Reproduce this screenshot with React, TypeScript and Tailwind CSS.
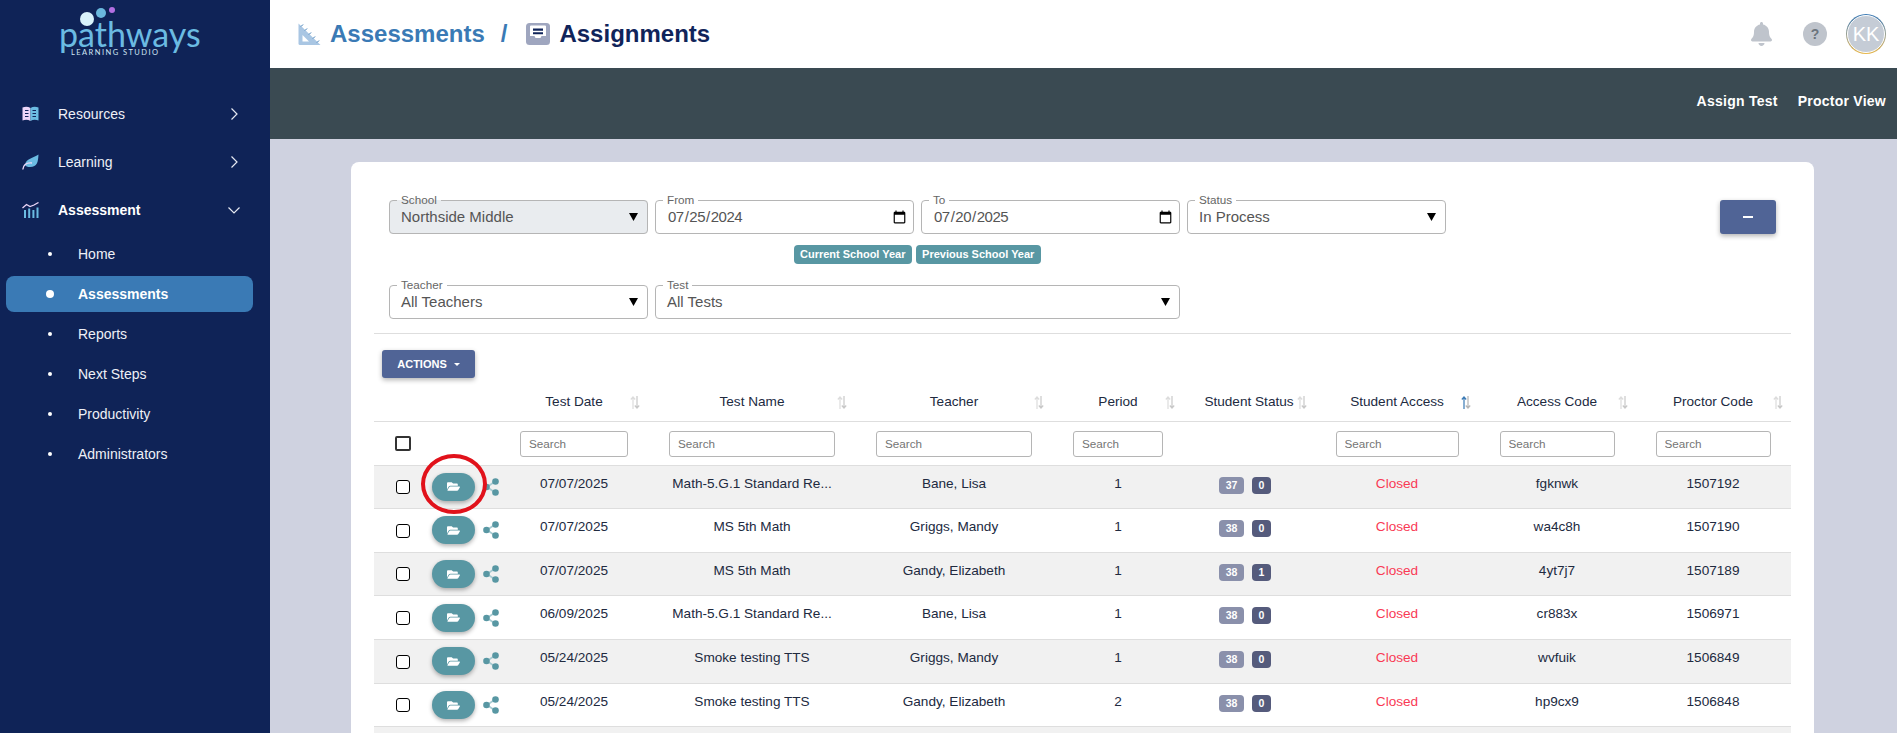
import React from "react";
import { FaBell, FaFolderOpen } from "react-icons/fa";

const FONT = "[font-family:'Liberation_Sans',Arial,sans-serif]";

const BookIcon = () => (
  <svg width="17" height="16" viewBox="0 0 17 16">
    <path d="M0.5 1.5 Q5 0 8.5 2 V15 Q5 13 0.5 14.5Z" fill="#ecd6f8" />
    <path d="M16.5 1.5 Q12 0 8.5 2 V15 Q12 13 16.5 14.5Z" fill="#6bbbe2" />
    <path d="M3 4.5h3.5M3 7.5h3.5M3 10.5h3.5M10.5 4.5H14M10.5 7.5H14M10.5 10.5H14" stroke="#10245a" strokeWidth="1.2" />
  </svg>
);
const LeafIcon = () => (
  <svg width="17" height="16" viewBox="0 0 17 16">
    <path d="M16.5 0.5 C16 8 15.5 13 8 13 C5.5 13 4 12.5 3 11 C4 4 11 4.5 16.5 0.5Z" fill="#6bbbe2" />
    <path d="M0.8 15.5 C1.5 10.5 5 8.5 10 9" stroke="#ecd6f8" strokeWidth="1.4" fill="none" />
  </svg>
);
const ChartIcon = () => (
  <svg width="17" height="16" viewBox="0 0 17 16">
    <path d="M0.5 6 L4.5 2.5 L8 4.5 L12 3 L16.5 0.5" stroke="#ecd6f8" strokeWidth="1.3" fill="none" />
    <path d="M2 8h2v8H2zM6.2 6.5h2V16h-2zM10.4 8h2v8h-2zM14.5 5.5h2V16h-2z" fill="#6bbbe2" />
  </svg>
);
const Chevron = ({ down }: { down?: boolean }) => (
  <svg width="12" height="12" viewBox="0 0 12 12" fill="none" stroke="#e6e9f2" strokeWidth="1.2">
    {down ? <path d="M0.5 3.5 L6 9 L11.5 3.5" /> : <path d="M3.5 0.5 L9 6 L3.5 11.5" />}
  </svg>
);
const SetSquare = () => (
  <svg width="23" height="23" viewBox="0 0 23 23">
    <path d="M0.5 0.5 L22.5 22 H2 Q0.5 22 0.5 20.5Z" fill="#a9c6e3" />
    <path d="M4.5 12 L11 18.5 H4.5Z" fill="#fff" />
    <path d="M3 3.5l2-2M7 7.5l2-2M11 11.5l2-2M15 15.5l2-2M19 19.5l2-2" stroke="#3a7ab5" strokeWidth="1" />
  </svg>
);
const InboxIcon = () => (
  <svg width="24" height="22" viewBox="0 0 24 22">
    <rect x="0" y="0" width="24" height="22" rx="3.5" fill="#9fa6bf" />
    <path d="M4 3.5 Q4 2.5 5 2.5 H19 Q20 2.5 20 3.5 V13 H15.5 L14.5 15 H9.5 L8.5 13 H4Z" fill="#fff" />
    <path d="M7 5.5h10v2.2H7zM7 9.2h10v2H7z" fill="#10245a" />
  </svg>
);
const Caret = () => (
  <svg width="9" height="8" viewBox="0 0 9 8" className="shrink-0">
    <path d="M0 0 H9 L4.5 8Z" fill="#000" />
  </svg>
);
const SortIcon = ({ active }: { active?: boolean }) => (
  <svg width="10" height="13" viewBox="0 0 10 13" fill="none" strokeWidth="1.2">
    <path d="M3 13V1M0.8 3.5 L3 1 L5.2 3.5" stroke={active ? "#3a7ab5" : "#dcdcdc"} />
    <path d="M7 0V12M4.8 9.5 L7 12 L9.2 9.5" stroke={active ? "#b5b5b5" : "#c8c8c8"} />
  </svg>
);
const ShareIcon = () => (
  <svg width="16" height="18" viewBox="0 0 16 18">
    <path d="M4 9 L12 3.5M4 9 L12 14.5" stroke="#a7cbd2" strokeWidth="1.6" />
    <circle cx="3.5" cy="9" r="3.3" fill="#5897a3" />
    <circle cx="12.5" cy="3.5" r="3.3" fill="#5897a3" />
    <circle cx="12.5" cy="14.5" r="3.3" fill="#5897a3" />
  </svg>
);

const Field = ({ label, className, gray, children }: { label: string; className?: string; gray?: boolean; children: React.ReactNode }) => (
  <fieldset className={`h-[41px] rounded-[4px] border border-[#b5b5b5] ${gray ? "bg-[#e9ecef]" : "bg-white"} ${className ?? ""}`}>
    <legend className="ml-[7px] px-[4px] text-[11.7px] leading-[14px] text-[#666]">{label}</legend>
    <div className="flex h-[20px] items-center justify-between pl-[11px] pr-[9px] text-[15px] text-[#555]">{children}</div>
  </fieldset>
);

const SelectField = ({ label, value, className, gray }: { label: string; value: string; className?: string; gray?: boolean }) => (
  <Field label={label} className={className} gray={gray}>
    <span>{value}</span>
    <Caret />
  </Field>
);

const DateField = ({ label, value }: { label: string; value: string }) => (
  <Field label={label}>
    <input type="date" defaultValue={value} className="h-[20px] w-[calc(100%+5px)] shrink-0 text-[15px] tracking-[-0.5px] text-[#555] outline-none" />
  </Field>
);

const NavItem = ({ icon, label, bold, down }: { icon: React.ReactNode; label: string; bold?: boolean; down?: boolean }) => (
  <div className="flex h-[48px] items-center pl-[22px] pr-[30px]">
    <span className="flex w-[36px] shrink-0">{icon}</span>
    <span className={`flex-1 text-[14px] ${bold ? "font-bold text-white" : "text-[#eef0f6]"}`}>{label}</span>
    <Chevron down={down} />
  </div>
);

const SubItem = ({ label, active }: { label: string; active?: boolean }) => (
  <div className="flex h-[40px] items-center px-[6px]">
    <div className={`flex h-[36px] w-[247px] items-center rounded-[8px] ${active ? "bg-[#3a7ab5]" : ""}`}>
      <span className="flex w-[72px] shrink-0 justify-center pl-[16px]">
        <span className={`rounded-full bg-white ${active ? "h-[8px] w-[8px]" : "h-[4px] w-[4px]"}`} />
      </span>
      <span className={`text-[14px] ${active ? "font-bold text-white" : "text-[#eef0f6]"}`}>{label}</span>
    </div>
  </div>
);

const columns = [
  { label: "Test Date", pos: "right-[17px]", w: "w-[166px]", search: "w-[108px]", pad: "" },
  { label: "Test Name", pos: "right-0", w: "w-[190px]", search: "w-[166px]", pad: "" },
  { label: "Teacher", pos: "right-[17px]", w: "w-[214px]", search: "w-[156px]", pad: "" },
  { label: "Period", pos: "right-0", w: "w-[114px]", search: "w-[90px]", pad: "" },
  { label: "Student Status", pos: "right-[8px]", w: "w-[140px]", search: "", pad: "pl-[8px]" },
  { label: "Student Access", pos: "right-[8px]", w: "w-[164px]", search: "w-[123px]", pad: "", active: true },
  { label: "Access Code", pos: "right-[7px]", w: "w-[156px]", search: "w-[115px]", pad: "" },
  { label: "Proctor Code", pos: "right-[8px]", w: "w-[156px]", search: "w-[115px]", pad: "" },
];

const rows = [
  ["07/07/2025", "Math-5.G.1 Standard Re...", "Bane, Lisa", "1", "37", "0", "fgknwk", "1507192"],
  ["07/07/2025", "MS 5th Math", "Griggs, Mandy", "1", "38", "0", "wa4c8h", "1507190"],
  ["07/07/2025", "MS 5th Math", "Gandy, Elizabeth", "1", "38", "1", "4yt7j7", "1507189"],
  ["06/09/2025", "Math-5.G.1 Standard Re...", "Bane, Lisa", "1", "38", "0", "cr883x", "1506971"],
  ["05/24/2025", "Smoke testing TTS", "Griggs, Mandy", "1", "38", "0", "wvfuik", "1506849"],
  ["05/24/2025", "Smoke testing TTS", "Gandy, Elizabeth", "2", "38", "0", "hp9cx9", "1506848"],
];

const Cell = ({ children }: { children: React.ReactNode }) => (
  <td className="h-[43.67px] truncate pt-[10px] align-top text-center leading-[15px]">{children}</td>
);

export default function App() {
  return (
    <div className={`flex h-[733px] w-full overflow-hidden bg-[#cfd2e0] ${FONT}`}>
      <aside className="h-full w-[270px] shrink-0 bg-[#0f2357]">
        <div className="flex h-[90px] flex-col items-start pl-[59px]">
          <svg width="70" height="24" viewBox="0 0 70 24" className="mt-[6px] shrink-0">
            <circle cx="28" cy="13" r="7" fill="#d9f2fb" />
            <circle cx="42" cy="7" r="5" fill="#6ab8dd" />
            <circle cx="53" cy="4" r="3" fill="#b36fe2" />
          </svg>
          <div className="mt-[-11px] text-[34px] leading-[30px] font-normal text-[#6bbbe2] [font-family:Lato,sans-serif]">pathways</div>
          <div className="mt-[0px] ml-[12px] text-[7.5px] leading-[8px] tracking-[1.45px] text-[#cfe6f5] [font-family:Lato,sans-serif]">LEARNING STUDIO</div>
        </div>
        <NavItem icon={<BookIcon />} label="Resources" />
        <NavItem icon={<LeafIcon />} label="Learning" />
        <NavItem icon={<ChartIcon />} label="Assessment" bold down />
        <SubItem label="Home" />
        <SubItem label="Assessments" active />
        <SubItem label="Reports" />
        <SubItem label="Next Steps" />
        <SubItem label="Productivity" />
        <SubItem label="Administrators" />
      </aside>

      <main className="flex min-w-0 flex-1 flex-col">
        <header className="flex h-[68px] shrink-0 items-center bg-white pl-[28px] pr-[11px]">
          <SetSquare />
          <span className="ml-[9px] text-[24px] font-bold text-[#3a7ab5]">Assessments</span>
          <span className="ml-[16px] text-[24px] font-bold text-[#3a7ab5]">/</span>
          <span className="ml-[19px] flex"><InboxIcon /></span>
          <span className="ml-[9px] text-[24px] font-bold text-[#10245a]">Assignments</span>
          <div className="ml-auto flex items-center">
            <FaBell className="h-[24px] w-[21px] text-[#bfc4cc]" />
            <span className="ml-[31px] flex h-[24px] w-[24px] items-center justify-center rounded-full bg-[#bfc4cc] text-[14px] font-bold text-[#6c757d]">?</span>
            <span className="ml-[19px] flex h-[40px] w-[40px] items-center justify-center rounded-full bg-linear-to-b from-[#3a7ab5] to-[#e8b84a] p-px">
              <span className="flex h-full w-full items-center justify-center rounded-full border border-white bg-[#c5ccd6] text-[20px] text-white">KK</span>
            </span>
          </div>
        </header>

        <div className="flex h-[71px] shrink-0 items-center justify-end gap-[20px] bg-[#3a4a52] pb-[4px] pr-[11px] text-[14px] font-bold tracking-[0.25px] text-white">
          <span>Assign Test</span>
          <span>Proctor View</span>
        </div>

        <section className="mt-[23px] ml-[81px] mr-[83px] flex-1 rounded-[8px] bg-white px-[23px] pt-[31px]">
          <div className="flex items-start justify-between border-b border-[#dedede] px-[15px] pb-[14px]">
            <div className="grid grid-cols-[repeat(4,258.5px)] gap-x-[7.5px]">
              <SelectField label="School" value="Northside Middle" gray />
              <DateField label="From" value="2024-07-25" />
              <DateField label="To" value="2025-07-20" />
              <SelectField label="Status" value="In Process" />
              <div className="col-span-2 col-start-2 mt-[11px] flex justify-center gap-[4px]">
                <span className="flex h-[19px] w-[118px] items-center justify-center rounded-[4px] bg-[#5897a3] text-[11px] font-bold text-white">Current School Year</span>
                <span className="flex h-[19px] w-[125px] items-center justify-center rounded-[4px] bg-[#5897a3] text-[11px] font-bold text-white">Previous School Year</span>
              </div>
              <div className="col-span-4 mt-[14px] grid grid-cols-[repeat(4,258.5px)] gap-x-[7.5px]">
                <SelectField label="Teacher" value="All Teachers" />
                <SelectField label="Test" value="All Tests" className="col-span-2" />
              </div>
            </div>
            <button className="mt-[7px] flex h-[34px] w-[56px] items-center justify-center rounded-[3px] bg-[#506496] shadow-[0_2px_5px_rgba(0,0,0,0.3)]">
              <span className="h-[2px] w-[10px] bg-white" />
            </button>
          </div>

          <div className="mt-[16px] pl-[8px]">
            <button className="flex h-[28px] w-[93px] items-center justify-center gap-[7px] rounded-[3px] bg-[#506496] text-[11px] font-bold text-white shadow-[0_2px_5px_rgba(0,0,0,0.3)]">
              ACTIONS
              <svg width="6" height="3" viewBox="0 0 6 3"><path d="M0 0h6L3 3z" fill="#fff" /></svg>
            </button>
          </div>

          <table className="mt-[2px] w-[1417px] table-fixed border-collapse text-[13.6px] text-[#212a3f]">
            <colgroup>
              <col className="w-[58px]" />
              <col className="w-[59px]" />
              {columns.map((c) => <col key={c.label} className={c.w} />)}
            </colgroup>
            <thead>
              <tr className="h-[41px] border-b border-[#dedede]">
                <th />
                <th />
                {columns.map((c) => (
                  <th key={c.label} className={`relative pt-[3px] text-center font-normal ${c.pad}`}>
                    {c.label}
                    <span className={`absolute top-[16px] flex ${c.pos}`}><SortIcon active={c.active} /></span>
                  </th>
                ))}
              </tr>
              <tr className="h-[44px] border-b border-[#dedede]">
                <th className="text-center align-middle">
                  <input type="checkbox" aria-label="Select all" className="h-[15px] w-[16px] appearance-none rounded-[2px] border-2 border-[#333] align-middle" />
                </th>
                <th />
                {columns.map((c) => (
                  <th key={c.label} className="pt-[1px] text-center font-normal">
                    {c.search && (
                      <input placeholder="Search" className={`h-[26px] rounded-[3px] border border-[#b5b5b5] pl-[8px] text-[11.7px] outline-none placeholder:text-[#757575] ${c.search}`} />
                    )}
                  </th>
                ))}
              </tr>
            </thead>
            <tbody>
              {rows.map((r, i) => (
                <tr key={i} className={`border-b border-[#dedede] ${i % 2 === 0 ? "bg-[#f1f1f1]" : "bg-white"}`}>
                  <td className="h-[43.67px] text-center align-middle">
                    <input type="checkbox" aria-label="Select row" className="h-[14px] w-[14px] appearance-none rounded-[3px] border border-black bg-white align-middle" />
                  </td>
                  <td className="align-middle">
                    <div className="flex items-center gap-[8px]">
                      <div className="relative shrink-0">
                        <button className="flex h-[28px] w-[43px] items-center justify-center rounded-full bg-[#5897a3] shadow-[0_2px_4px_rgba(0,0,0,0.3)]">
                          <FaFolderOpen className="h-[13px] w-[13px] text-white" />
                        </button>
                        {i === 0 && (
                          <span className="absolute top-[-19px] left-[-11px] h-[60px] w-[66px] rounded-[50%] border-[4px] border-[#e1121b]" />
                        )}
                      </div>
                      <span className="flex shrink-0"><ShareIcon /></span>
                    </div>
                  </td>
                  <Cell>{r[0]}</Cell>
                  <Cell>{r[1]}</Cell>
                  <Cell>{r[2]}</Cell>
                  <Cell>{r[3]}</Cell>
                  <td className="pt-[11px] align-top">
                    <div className="flex justify-center gap-[8px] text-[10.5px] font-bold leading-[17px] text-white">
                      <span className="h-[17px] w-[25px] rounded-[4px] bg-[#8a90ab] text-center">{r[4]}</span>
                      <span className="h-[17px] w-[19px] rounded-[4px] bg-[#555b7c] text-center">{r[5]}</span>
                    </div>
                  </td>
                  <td className="pt-[10px] align-top text-center leading-[15px] text-[#f93a55]">Closed</td>
                  <Cell>{r[6]}</Cell>
                  <Cell>{r[7]}</Cell>
                </tr>
              ))}
              <tr className="bg-[#f1f1f1]">
                <td colSpan={10} className="h-[43.67px]" />
              </tr>
            </tbody>
          </table>
        </section>
      </main>
    </div>
  );
}
